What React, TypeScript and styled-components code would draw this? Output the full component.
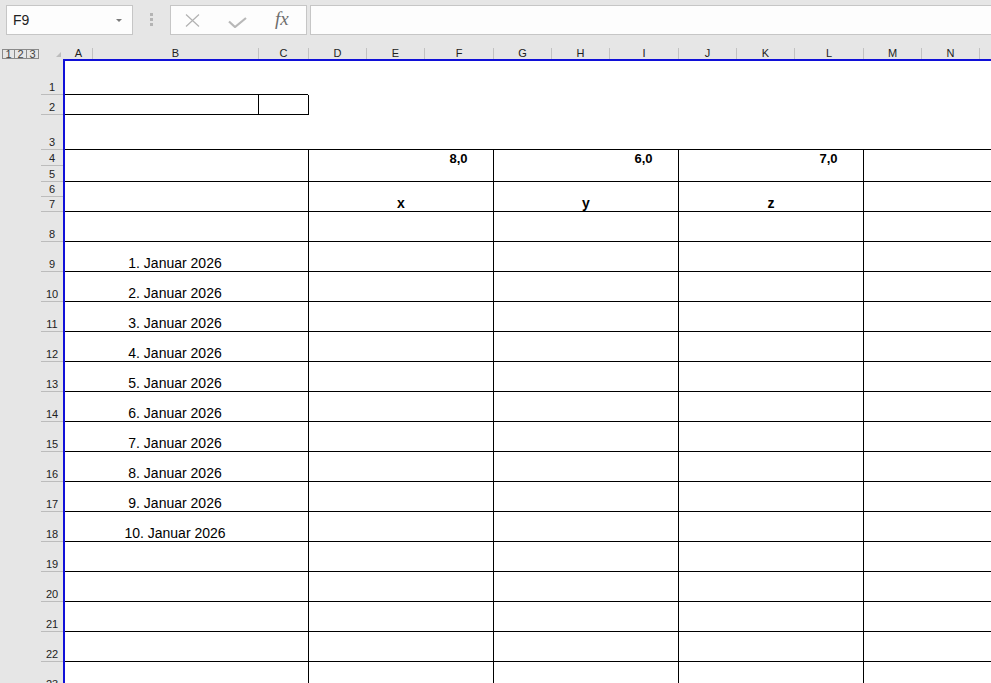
import React from 'react'
import styled, { createGlobalStyle } from 'styled-components'

// column widths A..O in px (sheet zoom as in the screenshot)
const COLS = [27, 166, 50, 58, 58, 69, 58, 58, 69, 58, 58, 69, 58, 58, 69]
const LETTERS = 'ABCDEFGHIJKLMN'.split('')
const DIVIDERS = [3, 6, 9, 12] // D, G, J, M get a black left line
const ROW_HEIGHTS = [34, 20, 35, 16, 16, 15, 15, 30, ...Array(14).fill(30), 30]

type Kind = 'date' | 'num' | 'label'

interface CellSpec {
  start: number
  span: number
  text?: string
  kind?: Kind
  left: boolean
  bottom: boolean
}

const width = (start: number, span: number) =>
  COLS.slice(start, start + span).reduce((a, b) => a + b, 0)

function buildRow(n: number): CellSpec[] {
  const framed = n >= 4
  const fullBottom = n === 3 || n === 5 || (n >= 7 && n <= 22)

  if (n === 7) {
    const groups: [number, number, string?][] = [
      [0, 1], [1, 1], [2, 1], [3, 3, 'x'], [6, 3, 'y'], [9, 3, 'z'], [12, 1], [13, 1], [14, 1],
    ]
    return groups.map(([start, span, text]) => ({
      start,
      span,
      text,
      kind: 'label',
      left: DIVIDERS.includes(start),
      bottom: true,
    }))
  }

  const nums: Record<number, string> = n === 4 ? { 5: '8,0', 8: '6,0', 11: '7,0' } : {}

  return COLS.map((_, i) => {
    let text: string | undefined
    let kind: Kind | undefined
    if (nums[i]) {
      text = nums[i]
      kind = 'num'
    }
    if (n >= 9 && n <= 18 && i === 1) {
      text = `${n - 8}. Januar 2026`
      kind = 'date'
    }
    return {
      start: i,
      span: 1,
      text,
      kind,
      left: (framed && DIVIDERS.includes(i)) || (n === 2 && (i === 2 || i === 3)),
      bottom: fullBottom || ((n === 1 || n === 2) && i <= 2),
    }
  })
}

const GlobalStyle = createGlobalStyle`
  html, body {
    margin: 0;
    padding: 0;
    background: #e6e6e6;
    overflow: hidden;
  }
  * {
    box-sizing: border-box;
  }
`

const Frame = styled.div`
  width: 991px;
  height: 683px;
  overflow: hidden;
  background: #e6e6e6;
  display: flex;
  flex-direction: column;
  font-family: 'Liberation Sans', Arial, sans-serif;
  color: #000;
`

const Toolbar = styled.div`
  flex: none;
  height: 44px;
  display: flex;
  align-items: flex-start;
  padding-top: 5px;
`

const NameBox = styled.div`
  flex: none;
  width: 127px;
  height: 30px;
  margin-left: 6px;
  border: 1px solid #c6c6c6;
  background: #fdfdfd;
  display: flex;
  align-items: center;
  padding: 0 10px 0 6px;
  font-size: 14px;
  color: #222;
`

const NameValue = styled.span`
  flex: 1;
`

const Caret = styled.span`
  width: 0;
  height: 0;
  border-left: 3px solid transparent;
  border-right: 3px solid transparent;
  border-top: 3px solid #7a7a7a;
`

const Grip = styled.div`
  flex: none;
  margin: 8px 0 0 17px;
  display: flex;
  flex-direction: column;
  gap: 2px;
  span {
    width: 3px;
    height: 3px;
    background: #b4b4b4;
  }
`

const ActionBox = styled.div`
  flex: none;
  width: 137px;
  height: 30px;
  margin-left: 17px;
  border: 1px solid #c6c6c6;
  background: #fdfdfd;
  display: flex;
  align-items: center;
  padding-left: 14px;
  gap: 28px;
`

const Fx = styled.span`
  font-family: 'Liberation Serif', 'Times New Roman', serif;
  font-style: italic;
  font-size: 19px;
  line-height: 20px;
  color: #6e6e6e;
  margin-top: -2px;
`

const FormulaInput = styled.div`
  flex: 1;
  height: 30px;
  margin: 0 -2px 0 3px;
  border: 1px solid #c6c6c6;
  background: #fdfdfd;
`

const HeaderRow = styled.div`
  flex: none;
  height: 15px;
  display: flex;
  align-items: flex-end;
`

const Corner = styled.div`
  flex: none;
  width: 65px;
  height: 15px;
  display: flex;
  align-items: flex-end;
  padding-left: 2px;
`

const OutlineButtons = styled.div`
  display: flex;
`

const OutlineButton = styled.span`
  width: 13px;
  height: 10px;
  margin-right: -1px;
  border: 1px solid #8a8a8a;
  font-size: 11px;
  line-height: 8px;
  text-align: center;
  color: #444;
`

const SelectAll = styled.span`
  margin: 0 4px 2px auto;
  width: 0;
  height: 0;
  border-left: 5px solid transparent;
  border-bottom: 5px solid #bdbdbd;
`

const ColHeader = styled.div<{ $w: number; $first: boolean }>`
  flex: none;
  width: ${(p) => p.$w}px;
  height: 11px;
  border-left: ${(p) => (p.$first ? 'none' : '1px solid #c2c2c2')};
  font-size: 11px;
  line-height: 11px;
  text-align: center;
  color: #222;
`

const Body = styled.div`
  flex: 1;
  display: flex;
  min-height: 0;
`

const RowHeaders = styled.div`
  flex: none;
  width: 63px;
  padding-top: 2px;
`

const RowHeader = styled.div<{ $h: number }>`
  height: ${(p) => p.$h}px;
  width: 22px;
  margin-left: 41px;
  border-bottom: 1px solid #bcbcbc;
  display: flex;
  align-items: flex-end;
  justify-content: center;
  font-size: 11px;
  line-height: 13px;
  color: #222;
`

const Sheet = styled.div`
  flex: 1;
  background: #fff;
  border-top: 2px solid #1010d8;
  border-left: 2px solid #1010d8;
  overflow: hidden;
`

const Row = styled.div<{ $h: number }>`
  height: ${(p) => p.$h}px;
  display: flex;
`

const Cell = styled.div<{ $w: number; $left: boolean; $bottom: boolean }>`
  flex: none;
  width: ${(p) => p.$w}px;
  height: 100%;
  display: flex;
  align-items: flex-end;
  justify-content: center;
  white-space: nowrap;
  border-left: ${(p) => (p.$left ? '1px solid #000' : 'none')};
  border-bottom: ${(p) => (p.$bottom ? '1px solid #000' : 'none')};
`

const DateText = styled.span`
  font-size: 14px;
  line-height: 16px;
`

const NumText = styled.span`
  font-size: 13px;
  line-height: 15px;
  font-weight: bold;
`

const LabelText = styled.span`
  font-size: 14px;
  line-height: 16px;
  font-weight: bold;
`

const CloseIcon = () => (
  <svg width="15" height="13" viewBox="0 0 15 13">
    <path d="M1 0.5 L14 12.5 M14 0.5 L1 12.5" stroke="#b2b2b2" strokeWidth="1.2" fill="none" />
  </svg>
)

const CheckIcon = () => (
  <svg width="19" height="11" viewBox="0 0 19 11" style={{ marginTop: 4 }}>
    <path d="M1 4.5 L7 10 L18 1" stroke="#b8b8b8" strokeWidth="2.2" fill="none" />
  </svg>
)

const renderText = (c: CellSpec) => {
  if (!c.text) return null
  if (c.kind === 'date') return <DateText>{c.text}</DateText>
  if (c.kind === 'num') return <NumText>{c.text}</NumText>
  return <LabelText>{c.text}</LabelText>
}

export default function App() {
  return (
    <>
      <GlobalStyle />
      <Frame>
        <Toolbar>
          <NameBox>
            <NameValue>F9</NameValue>
            <Caret />
          </NameBox>
          <Grip>
            <span />
            <span />
            <span />
          </Grip>
          <ActionBox>
            <CloseIcon />
            <CheckIcon />
            <Fx>fx</Fx>
          </ActionBox>
          <FormulaInput />
        </Toolbar>

        <HeaderRow>
          <Corner>
            <OutlineButtons>
              <OutlineButton>1</OutlineButton>
              <OutlineButton>2</OutlineButton>
              <OutlineButton>3</OutlineButton>
            </OutlineButtons>
            <SelectAll />
          </Corner>
          {LETTERS.map((l, i) => (
            <ColHeader key={l} $w={COLS[i]} $first={i === 0}>
              {l}
            </ColHeader>
          ))}
          <ColHeader $w={COLS[14]} $first={false} />
        </HeaderRow>

        <Body>
          <RowHeaders>
            {ROW_HEIGHTS.map((h, i) => (
              <RowHeader key={i} $h={h}>
                {i + 1}
              </RowHeader>
            ))}
          </RowHeaders>
          <Sheet>
            {ROW_HEIGHTS.map((h, i) => (
              <Row key={i} $h={h}>
                {buildRow(i + 1).map((c) => (
                  <Cell key={c.start} $w={width(c.start, c.span)} $left={c.left} $bottom={c.bottom}>
                    {renderText(c)}
                  </Cell>
                ))}
              </Row>
            ))}
          </Sheet>
        </Body>
      </Frame>
    </>
  )
}
